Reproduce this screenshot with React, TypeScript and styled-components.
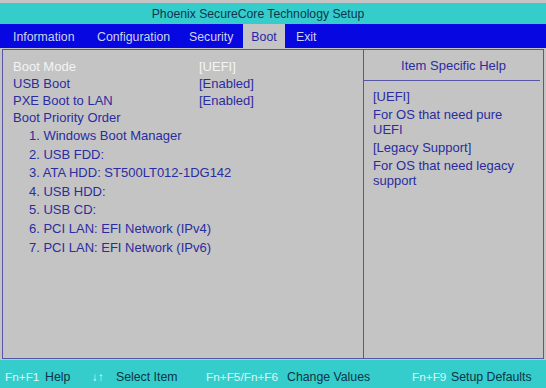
import styled, { createGlobalStyle } from "styled-components";

const GlobalStyle = createGlobalStyle`
  html, body {
    margin: 0;
    padding: 0;
    background: #c4c4c4;
  }
  body {
    font-family: "Liberation Sans", Arial, sans-serif;
    font-size: 13px;
  }
`;

const Screen = styled.div`
  width: 546px;
  height: 388px;
  display: flex;
  flex-direction: column;
  background: #c4c4c4;
  overflow: hidden;
`;

const TitleBar = styled.div`
  margin-top: 3px;
  height: 21px;
  background: #35cdcb;
  color: #0d3550;
  font-size: 12.2px;
  display: flex;
  align-items: center;
  justify-content: center;
  padding-right: 30px;
  padding-top: 1px;
  box-sizing: border-box;
`;

const TabBar = styled.div`
  height: 24px;
  background: #0707e2;
  display: grid;
  grid-template-columns: 90px 92px 61px 42px 1fr;
  font-size: 12.3px;
`;

const Tab = styled.div<{ active?: boolean; pad: number }>`
  display: flex;
  align-items: center;
  justify-content: ${(p) => (p.active ? "center" : "flex-start")};
  padding-left: ${(p) => p.pad}px;
  padding-top: 2px;
  background: ${(p) => (p.active ? "#c4c4c4" : "transparent")};
  color: ${(p) => (p.active ? "#2626a4" : "#cdd4ec")};
`;

const Main = styled.div`
  flex: 1;
  margin: 1px 2px 1px 2px;
  border: 1px solid #5656a4;
  display: grid;
  grid-template-columns: 1fr 179px;
`;

const LeftPanel = styled.div`
  border-right: 1px solid #5656a4;
  padding: 8px 0 0 10px;
  color: #2a2ca0;
`;

const SettingRow = styled.div<{ selected?: boolean }>`
  display: grid;
  grid-template-columns: 186px 1fr;
  height: 17px;
  line-height: 17px;
  color: ${(p) => (p.selected ? "#f4f4f4" : "#2a2ca0")};
`;

const OrderItem = styled.div`
  height: 18.6px;
  line-height: 19px;
  padding-left: 16px;
`;

const RightPanel = styled.div`
  display: flex;
  flex-direction: column;
  color: #2a2ca0;
  padding-right: 3px;
`;

const HelpHeader = styled.div`
  height: 30px;
  border-bottom: 1px solid #5656a4;
  display: flex;
  align-items: center;
  justify-content: center;
  padding-left: 3px;
`;

const HelpBody = styled.div`
  padding: 8px 0 0 9px;
  display: flex;
  flex-direction: column;
  gap: 3px;
`;

const HelpText = styled.div`
  line-height: 15px;
`;

const Footer = styled.div`
  height: 28px;
  background: #35cdcb;
  display: grid;
  grid-template-columns: 40px 47px 24px 90px 81px 125px 39px 1fr;
  align-items: center;
  padding-left: 5px;
  padding-top: 5px;
  box-sizing: border-box;
  font-size: 12.3px;
  white-space: nowrap;
`;

const KeyName = styled.span`
  color: #dcf6f4;
  font-size: 11.8px;
`;

const KeyDesc = styled.span`
  color: #0c3446;
`;

const settings = [
  { label: "Boot Mode", value: "[UEFI]", selected: true },
  { label: "USB Boot", value: "[Enabled]" },
  { label: "PXE Boot to LAN", value: "[Enabled]" },
  { label: "Boot Priority Order", value: "" },
];

const order = [
  "1. Windows Boot Manager",
  "2. USB FDD:",
  "3. ATA HDD: ST500LT012-1DG142",
  "4. USB HDD:",
  "5. USB CD:",
  "6. PCI LAN: EFI Network (IPv4)",
  "7. PCI LAN: EFI Network (IPv6)",
];

const tabs = [
  { name: "Information", pad: 13 },
  { name: "Configuration", pad: 7 },
  { name: "Security", pad: 7 },
  { name: "Boot", pad: 0 },
  { name: "Exit", pad: 11 },
];

const keys = [
  { key: "Fn+F1", desc: "Help" },
  { key: "\u2193\u2191", desc: "Select Item" },
  { key: "Fn+F5/Fn+F6", desc: "Change Values" },
  { key: "Fn+F9", desc: "Setup Defaults" },
];

const App = () => {
  return (
    <Screen>
      <GlobalStyle />
      <TitleBar>Phoenix SecureCore Technology Setup</TitleBar>
      <TabBar>
        {tabs.map((t) => (
          <Tab key={t.name} pad={t.pad} active={t.name === "Boot"}>
            {t.name}
          </Tab>
        ))}
      </TabBar>
      <Main>
        <LeftPanel>
          {settings.map((s) => (
            <SettingRow key={s.label} selected={s.selected}>
              <span>{s.label}</span>
              <span>{s.value}</span>
            </SettingRow>
          ))}
          {order.map((o) => (
            <OrderItem key={o}>{o}</OrderItem>
          ))}
        </LeftPanel>
        <RightPanel>
          <HelpHeader>Item Specific Help</HelpHeader>
          <HelpBody>
            <HelpText>[UEFI]</HelpText>
            <HelpText>
              For OS that need pure
              <br />
              UEFI
            </HelpText>
            <HelpText>[Legacy Support]</HelpText>
            <HelpText>
              For OS that need legacy
              <br />
              support
            </HelpText>
          </HelpBody>
        </RightPanel>
      </Main>
      <Footer>
        {keys.map((k) => [
          <KeyName key={k.key}>{k.key}</KeyName>,
          <KeyDesc key={k.desc}>{k.desc}</KeyDesc>,
        ])}
      </Footer>
    </Screen>
  );
};

export default App;
